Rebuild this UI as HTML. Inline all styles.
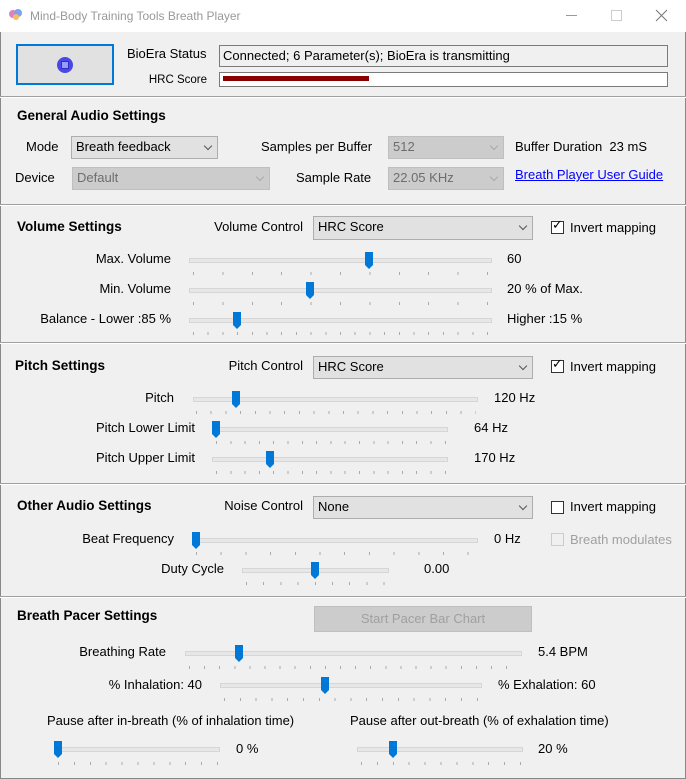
<!DOCTYPE html>
<html><head><meta charset="utf-8"><style>
*{margin:0;padding:0;box-sizing:border-box}
body{width:686px;height:779px;background:#f0f0f0;font-family:"Liberation Sans",Arial,sans-serif;font-size:13px;color:#000;position:relative;overflow:hidden}
.a{position:absolute;white-space:nowrap;line-height:16px}
.r{text-align:right}
.b{font-weight:bold;font-size:13.5px}
.sep{position:absolute;left:0;width:686px;height:2px;border-top:1px solid #a0a0a0;border-bottom:1px solid #fff}
.cb{position:absolute;background:#e1e1e1;border:1px solid #adadad;line-height:20px;padding-left:4px}
.cb.d{background:#cccccc;border-color:#bfbfbf;color:#6d6d6d}
.cb .v{position:absolute;right:6px;top:6px;width:6px;height:6px;border-right:1px solid #555;border-bottom:1px solid #555;transform:rotate(45deg)}
.cb.d .v{border-color:#aaa}
.tk{position:absolute;height:3px}
.chk{position:absolute;width:13px;height:13px;border:1px solid #333;background:#fff}
</style></head><body>
<div style="position:absolute;left:0;top:0;width:686px;height:32px;background:#fff"></div>
<svg style="position:absolute;left:8px;top:8px" width="16" height="14"><circle cx="5" cy="6" r="4" fill="#e080c0"/><circle cx="10" cy="5" r="4" fill="#80a0f0"/><circle cx="8" cy="9" r="3" fill="#f0c060"/></svg>
<div class="a" style="left:30px;top:8px;color:#999;font-size:12px">Mind-Body Training Tools Breath Player</div>
<svg style="position:absolute;left:560px;top:8px" width="110" height="16"><line x1="6" y1="7.5" x2="17" y2="7.5" stroke="#999"/><rect x="51.5" y="2.5" width="10" height="10" fill="none" stroke="#ccc"/><path d="M96 2 L107 13 M107 2 L96 13" stroke="#777" stroke-width="1"/></svg>
<div style="position:absolute;left:0;top:32px;width:1px;height:747px;background:#888"></div>
<div style="position:absolute;right:0;top:32px;width:1px;height:747px;background:#888"></div>
<div style="position:absolute;left:0;bottom:0;width:686px;height:1px;background:#888"></div>

<div style="position:absolute;left:16px;top:44px;width:98px;height:41px;border:2px solid #0078d7;background:#e1e1e1"></div>
<div style="position:absolute;left:57px;top:57px;width:16px;height:16px;border-radius:50%;background:#4848e8"></div>
<div style="position:absolute;left:61px;top:61px;width:8px;height:8px;background:#9a9af8;border:1px solid #3030c0"></div>
<div class="a" style="left:127px;top:46px">BioEra Status</div>
<div style="position:absolute;left:219px;top:45px;width:449px;height:22px;border:1px solid #7a7a7a;background:#f0f0f0"></div>
<div class="a" style="left:223px;top:48px">Connected; 6 Parameter(s); BioEra is transmitting</div>
<div class="a r" style="left:120px;width:87px;top:72px;font-size:11.5px">HRC Score</div>
<div style="position:absolute;left:219px;top:72px;width:449px;height:15px;border:1px solid #7a7a7a;background:#fff"></div>
<div style="position:absolute;left:223px;top:76px;width:146px;height:5px;background:#8b0000"></div>

<div class="sep" style="top:96px"></div>
<div class="a b" style="left:17px;top:108px">General Audio Settings</div>
<div class="a" style="left:26px;top:139px">Mode</div>
<div class="cb" style="left:71px;top:136px;width:147px;height:23px">Breath feedback<span class="v"></span></div>
<div class="a" style="left:261px;top:139px">Samples per Buffer</div>
<div class="cb d" style="left:388px;top:136px;width:116px;height:23px">512<span class="v"></span></div>
<div class="a" style="left:515px;top:139px">Buffer Duration&nbsp; 23 mS</div>
<div class="a" style="left:15px;top:170px">Device</div>
<div class="cb d" style="left:72px;top:167px;width:198px;height:23px">Default<span class="v"></span></div>
<div class="a" style="left:296px;top:170px">Sample Rate</div>
<div class="cb d" style="left:388px;top:167px;width:116px;height:23px">22.05 KHz<span class="v"></span></div>
<div class="a" style="left:515px;top:167px;color:#0000ff;text-decoration:underline">Breath Player User Guide</div>

<div class="sep" style="top:204px"></div>
<div class="a b" style="left:17px;top:219px">Volume Settings</div>
<div class="a r" style="left:180px;width:123px;top:219px">Volume Control</div>
<div class="cb" style="left:313px;top:216px;width:220px;height:24px">HRC Score<span class="v"></span></div>
<div class="chk" style="left:551px;top:221px"></div><div class="a" style="left:552px;top:217px;font-size:13px">✓</div>
<div class="a" style="left:570px;top:220px">Invert mapping</div>
<div class="a r" style="left:40px;width:131px;top:251px">Max. Volume</div>
<div class="a" style="left:507px;top:251px">60</div>
<div class="a r" style="left:40px;width:131px;top:281px">Min. Volume</div>
<div class="a" style="left:507px;top:281px">20 % of Max.</div>
<div class="a r" style="left:20px;width:151px;top:311px">Balance - Lower :85 %</div>
<div class="a" style="left:507px;top:311px">Higher :15 %</div>

<div class="sep" style="top:342px"></div>
<div class="a b" style="left:15px;top:358px">Pitch Settings</div>
<div class="a r" style="left:180px;width:123px;top:358px">Pitch Control</div>
<div class="cb" style="left:313px;top:356px;width:220px;height:23px">HRC Score<span class="v"></span></div>
<div class="chk" style="left:551px;top:360px"></div><div class="a" style="left:552px;top:356px">✓</div>
<div class="a" style="left:570px;top:359px">Invert mapping</div>
<div class="a r" style="left:60px;width:114px;top:390px">Pitch</div>
<div class="a" style="left:494px;top:390px">120 Hz</div>
<div class="a r" style="left:40px;width:155px;top:420px">Pitch Lower Limit</div>
<div class="a" style="left:474px;top:420px">64 Hz</div>
<div class="a r" style="left:40px;width:155px;top:450px">Pitch Upper Limit</div>
<div class="a" style="left:474px;top:450px">170 Hz</div>

<div class="sep" style="top:483px"></div>
<div class="a b" style="left:17px;top:498px">Other Audio Settings</div>
<div class="a r" style="left:180px;width:123px;top:498px">Noise Control</div>
<div class="cb" style="left:313px;top:496px;width:220px;height:23px">None<span class="v"></span></div>
<div class="chk" style="left:551px;top:501px"></div>
<div class="a" style="left:570px;top:499px">Invert mapping</div>
<div class="a r" style="left:40px;width:134px;top:531px">Beat Frequency</div>
<div class="a" style="left:494px;top:531px">0 Hz</div>
<div class="chk" style="left:551px;top:533px;border-color:#ccc;background:#f0f0f0"></div>
<div class="a" style="left:570px;top:532px;color:#a0a0a0">Breath modulates</div>
<div class="a r" style="left:100px;width:124px;top:561px">Duty Cycle</div>
<div class="a" style="left:424px;top:561px">0.00</div>

<div class="sep" style="top:596px"></div>
<div class="a b" style="left:17px;top:608px">Breath Pacer Settings</div>
<div style="position:absolute;left:314px;top:606px;width:218px;height:26px;background:#cccccc;border:1px solid #bfbfbf;color:#a0a0a0;text-align:center;line-height:24px">Start Pacer Bar Chart</div>
<div class="a r" style="left:40px;width:126px;top:644px">Breathing Rate</div>
<div class="a" style="left:538px;top:644px">5.4 BPM</div>
<div class="a r" style="left:60px;width:142px;top:677px">% Inhalation: 40</div>
<div class="a" style="left:498px;top:677px">% Exhalation: 60</div>
<div class="a" style="left:47px;top:713px">Pause after in-breath (% of inhalation time)</div>
<div class="a" style="left:350px;top:713px">Pause after out-breath (% of exhalation time)</div>
<div class="a" style="left:236px;top:741px">0 %</div>
<div class="a" style="left:538px;top:741px">20 %</div>

<svg style="position:absolute;left:0;top:0" width="686" height="779">
<defs><path id="th" d="M-4,-8 H4 V5 L0,9 L-4,5 Z" fill="#0078d7"/></defs>
<g fill="#e7e7e7" stroke="#d6d6d6">
<rect x="189.5" y="258.5" width="302" height="4"/>
<rect x="189.5" y="288.5" width="302" height="4"/>
<rect x="189.5" y="318.5" width="302" height="4"/>
<rect x="193.5" y="397.5" width="284" height="4"/>
<rect x="212.5" y="427.5" width="235" height="4"/>
<rect x="212.5" y="457.5" width="235" height="4"/>
<rect x="193.5" y="538.5" width="284" height="4"/>
<rect x="242.5" y="568.5" width="146" height="4"/>
<rect x="185.5" y="651.5" width="336" height="4"/>
<rect x="220.5" y="683.5" width="261" height="4"/>
<rect x="55.5" y="747.5" width="164" height="4"/>
<rect x="357.5" y="747.5" width="165" height="4"/>
</g>
<g>
<use href="#th" x="369" y="260"/>
<use href="#th" x="310" y="290"/>
<use href="#th" x="237" y="320"/>
<use href="#th" x="236" y="399"/>
<use href="#th" x="216" y="429"/>
<use href="#th" x="270" y="459"/>
<use href="#th" x="196" y="540"/>
<use href="#th" x="315" y="570"/>
<use href="#th" x="239" y="653"/>
<use href="#th" x="325" y="685"/>
<use href="#th" x="58" y="749"/>
<use href="#th" x="393" y="749"/>
</g>
</svg>
<div class="tk" style="left:193px;top:272px;width:296px;background:repeating-linear-gradient(90deg,#aaa 0 1px,transparent 1px 29.4px)"></div>
<div class="tk" style="left:193px;top:302px;width:296px;background:repeating-linear-gradient(90deg,#aaa 0 1px,transparent 1px 29.4px)"></div>
<div class="tk" style="left:193px;top:332px;width:296px;background:repeating-linear-gradient(90deg,#aaa 0 1px,transparent 1px 14.7px)"></div>
<div class="tk" style="left:196px;top:411px;width:280px;background:repeating-linear-gradient(90deg,#aaa 0 1px,transparent 1px 14.7px)"></div>
<div class="tk" style="left:216px;top:441px;width:230px;background:repeating-linear-gradient(90deg,#aaa 0 1px,transparent 1px 14.3px)"></div>
<div class="tk" style="left:216px;top:471px;width:230px;background:repeating-linear-gradient(90deg,#aaa 0 1px,transparent 1px 14.3px)"></div>
<div class="tk" style="left:196px;top:552px;width:280px;background:repeating-linear-gradient(90deg,#aaa 0 1px,transparent 1px 24.7px)"></div>
<div class="tk" style="left:246px;top:582px;width:140px;background:repeating-linear-gradient(90deg,#aaa 0 1px,transparent 1px 17.2px)"></div>
<div class="tk" style="left:189px;top:666px;width:330px;background:repeating-linear-gradient(90deg,#aaa 0 1px,transparent 1px 15.1px)"></div>
<div class="tk" style="left:224px;top:698px;width:255px;background:repeating-linear-gradient(90deg,#aaa 0 1px,transparent 1px 15.8px)"></div>
<div class="tk" style="left:58px;top:762px;width:160px;background:repeating-linear-gradient(90deg,#aaa 0 1px,transparent 1px 15.9px)"></div>
<div class="tk" style="left:361px;top:762px;width:160px;background:repeating-linear-gradient(90deg,#aaa 0 1px,transparent 1px 15.9px)"></div>
</body></html>
